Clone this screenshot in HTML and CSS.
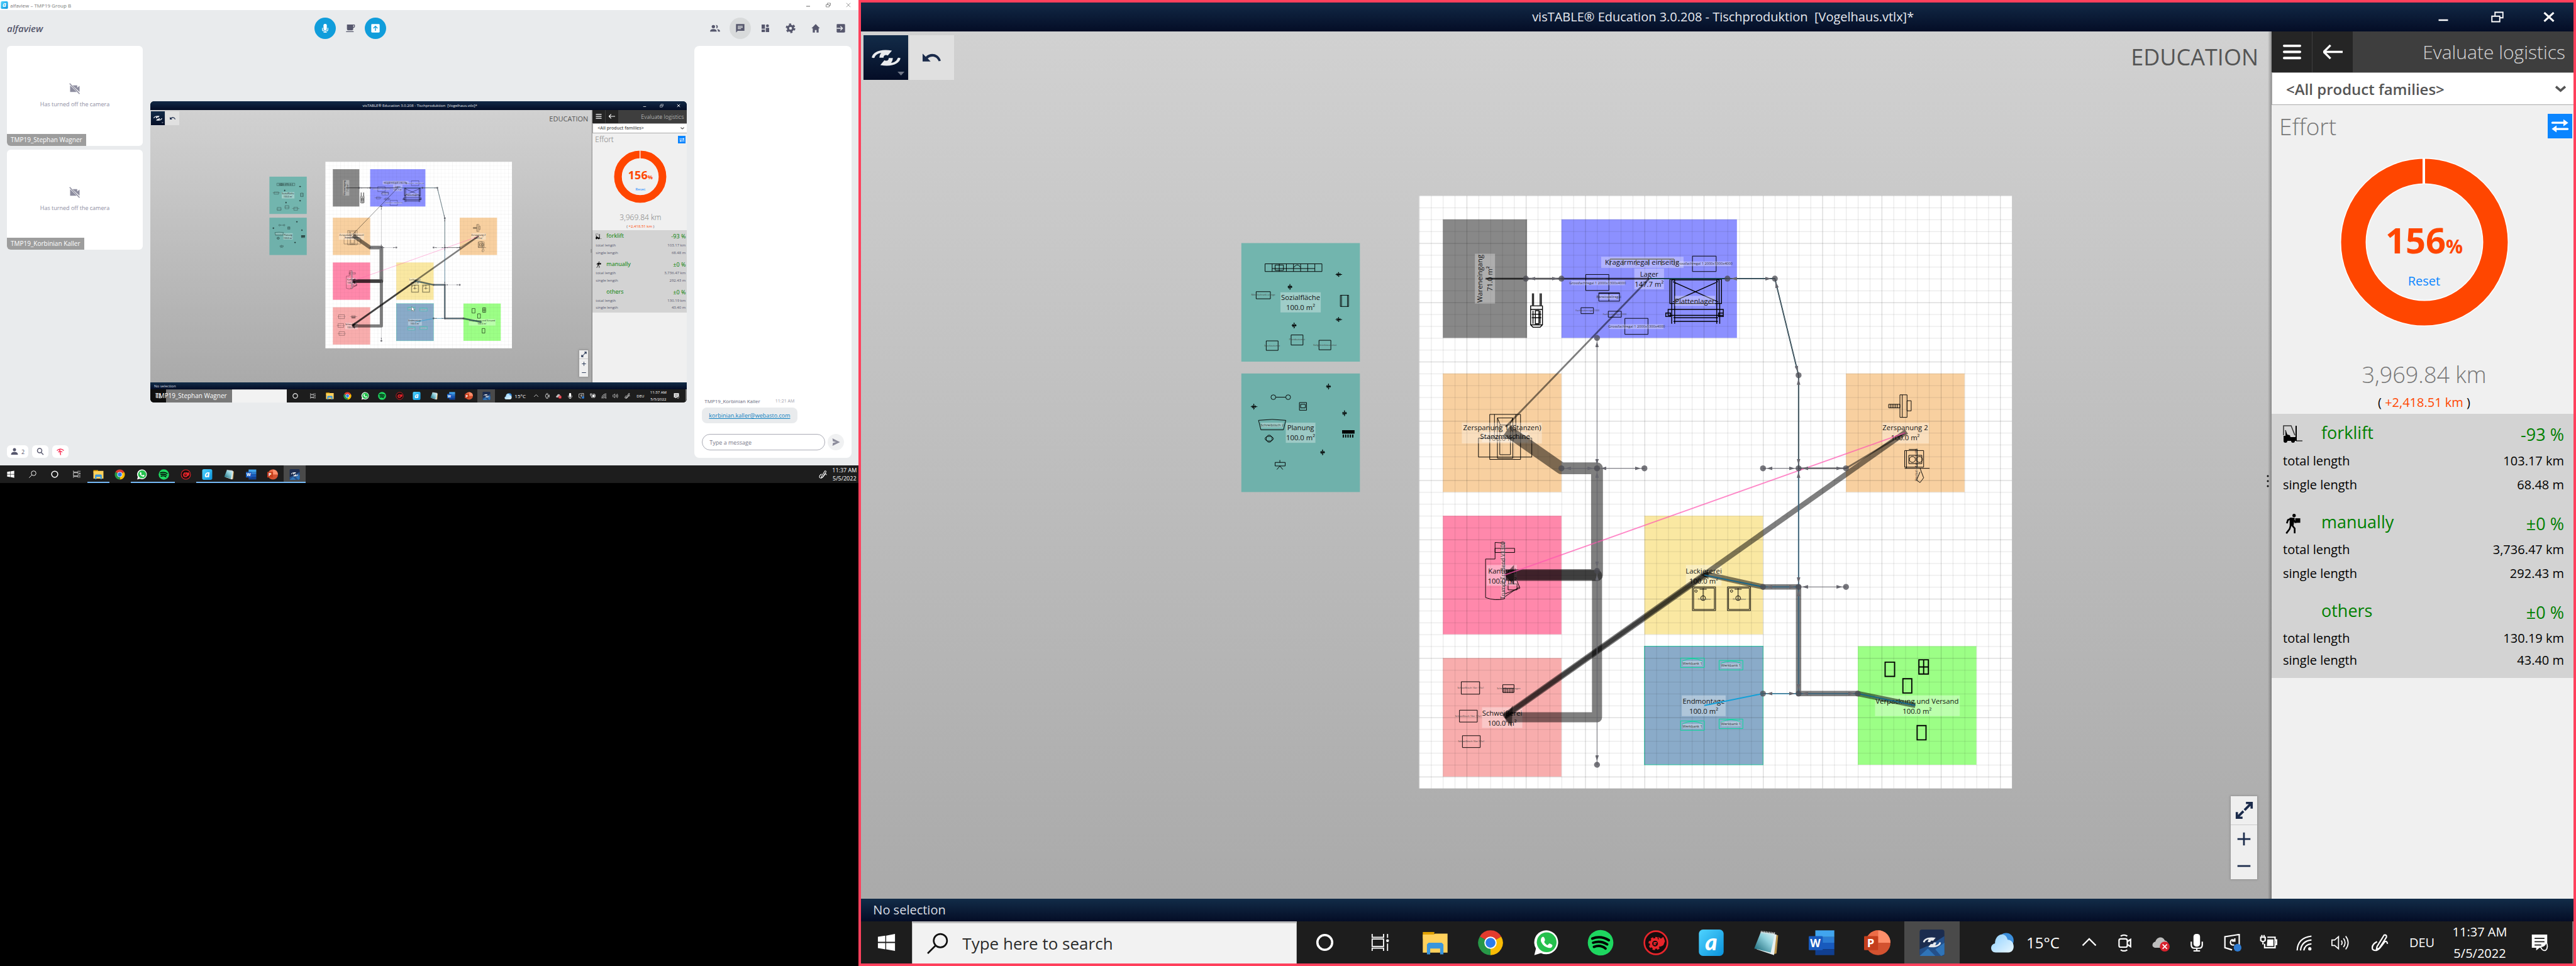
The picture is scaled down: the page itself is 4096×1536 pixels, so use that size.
FILE: index.html
```html
<!DOCTYPE html>
<html lang="en">
<head>
<meta charset="utf-8">
<title>alfaview – TMP19 Group B</title>
<link rel="stylesheet" href="styles.css">
</head>
<body>
<svg class="defs" aria-hidden="true">
  <defs>
    <linearGradient id="g-alfa" x1="0" y1="0" x2="1" y2="1"><stop offset="0" stop-color="#4fd3ff"/><stop offset="1" stop-color="#0a93dc"/></linearGradient>
    <linearGradient id="g-note" x1="0" y1="1" x2="1" y2="0"><stop offset="0" stop-color="#0f5f70"/><stop offset=".6" stop-color="#8fd0dc"/><stop offset="1" stop-color="#e4f6f8"/></linearGradient>
    <linearGradient id="g-sky" x1="0" y1="0" x2="1" y2="1"><stop offset="0" stop-color="#8fd0ff"/><stop offset="1" stop-color="#e8f7ff"/></linearGradient>
    <marker id="tip" viewBox="0 0 10 6" refX="16" refY="3" markerWidth="10" markerHeight="6" markerUnits="userSpaceOnUse" orient="auto-start-reverse"><path d="M0 0L10 3L0 6z" fill="#66666e"/></marker>
    <pattern id="minor" width="20" height="20" patternUnits="userSpaceOnUse"><path d="M.5 0V20M0 .5H20" stroke="#000" stroke-opacity=".11" fill="none"/></pattern>
    <pattern id="major" x="80" y="80" width="100" height="100" patternUnits="userSpaceOnUse"><path d="M.5 0V100M0 .5H100" stroke="#000" stroke-opacity=".1" fill="none"/></pattern>
  </defs>
  <symbol id="i-win" viewBox="0 0 32 32"><path fill="#fff" d="M1 6l13-2v11H1zM15.500 4L31 1v14H15.500zM1 17h13v11L1 26zM15.500 17H31v14l-15.500-3z"/></symbol>
  <symbol id="i-mag" viewBox="0 0 32 32"><g fill="none" stroke="currentColor" stroke-width="2.500"><circle cx="20" cy="12" r="10"/><path d="M13 19L1 31"/></g></symbol>
  <symbol id="i-cortana" viewBox="0 0 32 32"><circle cx="16" cy="16" r="13" fill="none" stroke="#fff" stroke-width="4"/></symbol>
  <symbol id="i-tasks" viewBox="0 0 32 32"><path fill="none" stroke="#fff" stroke-width="2" d="M2 1v6h20V1M2 10h20v13H2zM2 31v-5h20v5M29 1v7M29 18v13"/><circle cx="29" cy="13" r="2.500" fill="#fff"/></symbol>
  <symbol id="i-folder" viewBox="0 0 32 32"><path fill="#e0a100" d="M1 3h14v8H1z"/><path fill="#ffd15c" d="M1 6h13l2-1h15v23H1z"/><path fill="#3a96dd" d="M6 30V18l2-2h16l2 2v12h-4v-7H10v7z"/></symbol>
  <symbol id="i-chrome" viewBox="0 0 32 32"><path fill="#e33b2e" d="M16 16L3 8.500A15 15 0 0 1 29 8.500z"/><path fill="#fbbc05" d="M16 16L29 8.500A15 15 0 0 1 16 31z"/><path fill="#279847" d="M16 16V31A15 15 0 0 1 3 8.500z"/><path fill="#e33b2e" d="M16 8.500H29L16 12z"/><circle cx="16" cy="16" r="7.500" fill="#fff"/><circle cx="16" cy="16" r="6" fill="#2d7cec"/></symbol>
  <symbol id="i-wa" viewBox="0 0 32 32"><path fill="#fff" d="M2 31l2-8A14.500 14.500 0 1 1 10 28.500z"/><circle cx="17" cy="15.500" r="12" fill="#25c04d"/><path fill="#fff" d="M12 9c2-1 3 3 3 4l-1 2c1 2 2 3 4 4l2-2c2 0 4 2 4 2 0 3-3 4-5 3-5-1-8-5-9-8 0-2 0-4 2-5z"/></symbol>
  <symbol id="i-spot" viewBox="0 0 32 32"><circle cx="16" cy="16" r="15.500" fill="#1ed760"/><path fill="none" stroke="#000" stroke-width="3" stroke-linecap="round" d="M6 11q10-4 20 2M7 16q9-3 17 2M8 21q8-3 14 2"/></symbol>
  <symbol id="i-red" viewBox="0 0 32 32"><circle cx="16" cy="16" r="14" fill="#150c0d" stroke="#e8252b" stroke-width="2"/><g fill="none" stroke="#e8252b"><circle cx="15" cy="17" r="5" stroke-width="3"/><circle cx="15" cy="17" r="7" stroke-width="2" stroke-dasharray="3 2.500"/></g><path fill="#e8252b" d="M19 9l3 2 3-2 2 5-2 5-4 2z"/><path fill="none" stroke="#e8252b" stroke-width="1.500" d="M17 16h-3v2h2"/></symbol>
  <symbol id="i-alfa" viewBox="0 0 32 32"><rect x="1" y="0" width="30" height="32" rx="5" fill="url(#g-alfa)"/><text x="16" y="25" text-anchor="middle" font-family="Lato, sans-serif" font-style="italic" font-weight="900" font-size="28" fill="#fff">a</text></symbol>
  <symbol id="i-note" viewBox="0 0 32 32"><path fill="#b8924a" d="M27 6l3 1-2 22-4 1z"/><path fill="#e8f0f0" d="M10 3l18 3-3 25-21-7z"/><path fill="url(#g-note)" d="M9 3l17 2-5 23L1 23z"/><path stroke="#ddd" stroke-dasharray="1 1" stroke-width="3" d="M9 3l18 2"/></symbol>
  <symbol id="i-word" viewBox="0 0 32 32"><path fill="#41a5ee" d="M8 1h23v8H8z"/><path fill="#2b7cd3" d="M8 9h23v7H8z"/><path fill="#185abd" d="M8 16h23v8H8z"/><path fill="#103f91" d="M8 24h23v7H8z"/><rect y="8" width="17" height="17" rx="1" fill="#185abd"/><text x="8" y="21" text-anchor="middle" font-family="Open Sans, sans-serif" font-weight="700" font-size="13" fill="#fff">W</text></symbol>
  <symbol id="i-ppt" viewBox="0 0 32 32"><circle cx="17" cy="16" r="15" fill="#d35230"/><path fill="#ed6c47" d="M17 16V1A15 15 0 0 0 2 16z"/><path fill="#ff8f6b" d="M17 1A15 15 0 0 1 32 16H17z"/><rect y="8" width="17" height="17" rx="1" fill="#c43e1c"/><text x="8" y="21" text-anchor="middle" font-family="Open Sans, sans-serif" font-weight="700" font-size="14" fill="#fff">P</text></symbol>
  <symbol id="i-swirl" viewBox="84 327 195 111"><g fill="#e9ebee"><path d="M84 380C90 345 140 318 221 333L193 367C180 358 163 365 164 381H136C137 366 141 356 149 349C125 350 108 364 102 383Q92 384 84 380z"/><path transform="rotate(180 181.500 382.500)" d="M84 380C90 345 140 318 221 333L193 367C180 358 163 365 164 381H136C137 366 141 356 149 349C125 350 108 364 102 383Q92 384 84 380z"/></g></symbol>
  <symbol id="i-vis" viewBox="0 0 32 32"><rect x="1" width="30" height="32" rx="3" fill="#1b2c4f"/><path fill="#24508a" d="M1 24l14-6 16-10v21q0 3-3 3H4q-3 0-3-3z"/><path fill="#2f74b8" d="M1 32l10-9 9 9zM20 24l11-8v14l-4 2z"/><use href="#i-swirl" x="5" y="9" width="22" height="13"/></symbol>
  <symbol id="i-weather" viewBox="0 0 32 32"><circle cx="21" cy="13" r="10" fill="#3b8fdd"/><path fill="url(#g-sky)" d="M7 29C-1 29-1 18 6 17 6 4 20 0 23 12c10 0 11 17 1 17z"/></symbol>
  <symbol id="i-up" viewBox="0 0 32 32"><path fill="none" stroke="#fff" stroke-width="2.500" d="M4 21L16 9l12 12"/></symbol>
  <symbol id="i-meet" viewBox="0 0 32 32"><g fill="none" stroke="#fff" stroke-width="2.500"><rect x="5" y="9" width="15" height="15" rx="3"/><path d="M20 14l6-4v13l-6-4M8 4q6-4 12 0M8 29q6 4 12 0"/></g></symbol>
  <symbol id="i-cloudx" viewBox="0 0 32 32"><path fill="#bdbdbd" d="M5 25C-2 24 0 15 6 14c2-9 14-11 17-2 8 1 8 13 0 13z"/><circle cx="23" cy="23" r="9" fill="#d9232e"/><path stroke="#fff" stroke-width="2" d="M19 19l8 8M27 19l-8 8"/></symbol>
  <symbol id="i-mic" viewBox="0 0 32 32"><rect x="10" y="0" width="12" height="23" rx="5" fill="currentColor"/><path fill="none" stroke="currentColor" stroke-width="2.500" d="M6 14v6q0 6 6 6h8q6 0 6-6v-6M16 26v5M10 31h12"/></symbol>
  <symbol id="i-sync" viewBox="0 0 32 32"><path fill="none" stroke="#fff" stroke-width="2.500" d="M15 29L2 25V5l26-4v20M19 12q-6-4-7 3 0 6 7 5M20 8v5h-5"/><circle cx="25" cy="25" r="7" fill="#2f7bd0"/></symbol>
  <symbol id="i-power" viewBox="0 0 32 32"><path fill="none" stroke="#fff" stroke-width="2.500" d="M14 6h14v19H9v-7M28 11h3v8h-3M2 6h8v6q-4 4-8 0zM4 6V2M8 6V2M6 14v5"/><path fill="#fff" d="M14 10h11v12H13z"/></symbol>
  <symbol id="i-wifi" viewBox="0 0 32 32"><g fill="none" stroke="#fff" stroke-width="2.500"><path d="M3 30Q4 7 29 4M9 30Q11 13 29 11M15 30Q17 19 29 18"/></g><circle cx="26" cy="27" r="3" fill="#fff"/></symbol>
  <symbol id="i-sound" viewBox="0 0 32 32"><path fill="none" stroke="#fff" stroke-width="2" d="M1 11h5l7-6v22l-7-6H1zM18 12q3 4 0 8M22 8q6 8 0 16M26 4q9 12 0 24"/></symbol>
  <symbol id="i-pen" viewBox="0 0 32 32"><path fill="none" stroke="#fff" stroke-width="2.500" d="M11 23L24 2q5-1 4 4L15 26l-5 2zM11 14q-11 6-8 14 8 6 16-6l6-8q4-2 5 4"/></symbol>
  <symbol id="i-notif" viewBox="0 0 32 32"><path fill="#fff" d="M2 1h28v24H16l-6 5v-5H2z"/><path stroke="#1d1d1d" stroke-width="2" d="M7 8h18M7 14h18M7 20h12"/><path fill="#1d1d1d" stroke="#fff" stroke-width="2" d="M28 15q-2 8-10 8 2 8 9 7 6-6 1-15z"/></symbol>
  <symbol id="i-undo" viewBox="427 357 121 53"><path fill="#1b2b4b" d="M427 357V410H480L461 390C482 370 520 372 534 409L548 404C530 350 474 350 448 378z"/></symbol>
  <symbol id="i-menu" viewBox="0 0 32 32"><path stroke="#fff" stroke-width="4" stroke-linecap="round" d="M3 6h26M3 16h26M3 26h26"/></symbol>
  <symbol id="i-back" viewBox="0 0 32 32"><path fill="none" stroke="#fff" stroke-width="3.500" d="M32 16H1M12 5L1 16l11 11"/></symbol>
  <symbol id="i-chev" viewBox="0 0 32 32"><path fill="none" stroke="#555" stroke-width="7" d="M2 9l14 12L30 9"/></symbol>
  <symbol id="i-swap" viewBox="0 0 32 32"><path stroke="#fff" stroke-width="3" stroke-linecap="round" d="M5 12h18M9 21h18"/><path fill="#fff" d="M21 7l7 5-7 5zM11 16l-7 5 7 5z"/></symbol>
  <symbol id="i-fork" viewBox="0 0 32 28"><path fill="none" stroke="#333" stroke-width="1.500" d="M1 16V1h12l6 15M4 8l2 7M31 25H21"/><path d="M1 17l3 0V9l3 6 4 1 1 3 8 0V1h2v24H1z"/><circle cx="4" cy="25" r="3"/><circle cx="16" cy="25" r="3"/></symbol>
  <symbol id="i-walk" viewBox="0 0 28 36"><circle cx="16" cy="3" r="3"/><path d="M18 8h9v8h-9z"/><path fill="none" stroke="#000" stroke-width="3" d="M12 8l-7 3-2 6M14 9l4 6 5-1M10 20l-2 7-6 8M12 20l5 6v9"/><path d="M8 7h9l-2 14H8z"/></symbol>
  <symbol id="i-fit" viewBox="0 0 32 32"><path fill="#1b2b4b" d="M19 1h12v12h-4V8l-9 9-3-3 9-9h-5zM1 19h4v5l8-8 3 3-8 8h5v4H1z"/></symbol>
  <symbol id="i-plus" viewBox="0 0 32 32"><path stroke="#1b2b4b" stroke-width="4" d="M1 16h30M16 1v30"/></symbol>
  <symbol id="i-minus" viewBox="0 0 32 32"><path stroke="#1b2b4b" stroke-width="4" d="M1 16h30"/></symbol>
  <symbol id="i-min" viewBox="0 0 32 32"><path stroke="currentColor" stroke-width="4" d="M4 24h24"/></symbol>
  <symbol id="i-restore" viewBox="0 0 32 32"><path fill="none" stroke="currentColor" stroke-width="3" d="M2 14h20v14H2zM10 14V4h20v14h-8"/></symbol>
  <symbol id="i-close" viewBox="0 0 32 32"><path stroke="currentColor" stroke-width="5" d="M4 5l24 22M28 5L4 27"/></symbol>
  <symbol id="i-thin-close" viewBox="0 0 32 32"><path stroke="currentColor" stroke-width="2.500" d="M3 3l26 26M29 3L3 29"/></symbol>
  <symbol id="i-cup" viewBox="0 0 24 24"><path fill="currentColor" d="M4 3h17q2 0 2 2v3q0 3-4 3v2q0 4-4 4H8q-4 0-4-4zm15 2v4q2 0 2-1V5zM2 19h18v2H2z"/></symbol>
  <symbol id="i-share" viewBox="0 0 24 24"><path fill="#fff" d="M4 2h16q2 0 2 2v16q0 2-2 2H4q-2 0-2-2V4q0-2 2-2z"/><path fill="none" stroke="#109ddb" stroke-width="2" d="M12 18V7M7 12l5-5 5 5"/></symbol>
  <symbol id="i-people" viewBox="0 0 24 24"><g fill="currentColor"><circle cx="8" cy="8" r="4"/><path d="M0 20q0-6 8-6t8 6zM14 4a4 4 0 1 1 1 8q2-4-1-8zM17 14q7 1 7 6h-5q0-4-2-6z"/></g></symbol>
  <symbol id="i-chat" viewBox="0 0 24 24"><path fill="currentColor" fill-rule="evenodd" d="M2 2h20v16H6l-4 4zM6 6v2h12V6zm0 3v2h12V9zm0 3v2h8v-2z"/></symbol>
  <symbol id="i-tiles" viewBox="0 0 24 24"><path fill="currentColor" d="M3 3h8v10H3zM3 15h8v6H3zM13 11h8v10h-8z"/><circle cx="17" cy="6" r="3.500" fill="currentColor"/></symbol>
  <symbol id="i-gear" viewBox="0 0 24 24"><circle cx="12" cy="12" r="6" fill="none" stroke="currentColor" stroke-width="5"/><circle cx="12" cy="12" r="9.500" fill="none" stroke="currentColor" stroke-width="4" stroke-dasharray="5 5"/></symbol>
  <symbol id="i-home" viewBox="0 0 24 24"><path fill="currentColor" d="M12 2l10 10h-3v10h-5v-6h-4v6H5V12H2z"/></symbol>
  <symbol id="i-exit" viewBox="0 0 24 24"><path fill="currentColor" d="M4 2h16q2 0 2 2v16q0 2-2 2H4q-2 0-2-2V4q0-2 2-2z"/><path fill="none" stroke="#e9ebed" stroke-width="2" d="M2 12h14M11 7l5 5-5 5"/></symbol>
  <symbol id="i-nocam" viewBox="0 0 24 24"><path fill="currentColor" d="M7 5h10v5l5-4v13zM2 5l14 14H2z"/><path stroke="currentColor" stroke-width="2" d="M1 1l21 22"/></symbol>
  <symbol id="i-person" viewBox="0 0 24 24"><circle cx="12" cy="6" r="5" fill="currentColor"/><path fill="currentColor" d="M1 22q0-9 11-9t11 9z"/></symbol>
  <symbol id="i-find" viewBox="0 0 24 24"><g fill="none" stroke="currentColor" stroke-width="3"><circle cx="10" cy="9" r="7"/><path d="M14 14l8 8"/></g></symbol>
  <symbol id="i-signal" viewBox="0 0 24 24"><g fill="none" stroke="#f8365a" stroke-width="3"><path d="M1 9Q12-1 23 9M5 14q7-6 13 0M9 4l4 19"/></g></symbol>
  <symbol id="i-send" viewBox="0 0 24 24"><path fill="#8d8d9c" d="M4 3l18 9-18 9 1-7 8-2-8-2z"/></symbol>
</svg>

<main class="desktop">
  <div class="left-col">
    <section class="alfa">
      <header class="alfa-title">
        <svg class="s12"><use href="#i-alfa"/></svg><span>alfaview – TMP19 Group B</span>
        <div class="alfa-win"><button aria-label="Minimize"><svg class="s8"><use href="#i-min"/></svg></button><button aria-label="Restore"><svg class="s8"><use href="#i-restore"/></svg></button><button aria-label="Close"><svg class="s8"><use href="#i-thin-close"/></svg></button></div>
      </header>
      <div class="alfa-bar">
        <div class="brand">alfaview</div>
        <div class="alfa-tools"><button class="on" aria-label="Microphone"><svg class="s14"><use href="#i-mic"/></svg></button><button aria-label="Break"><svg class="s16"><use href="#i-cup"/></svg></button><button class="on" aria-label="Share"><svg class="s16"><use href="#i-share"/></svg></button></div>
        <div class="alfa-tools end"><button aria-label="People"><svg class="s16"><use href="#i-people"/></svg></button><button class="sel" aria-label="Chat"><svg class="s16"><use href="#i-chat"/></svg></button><button aria-label="Layout"><svg class="s16"><use href="#i-tiles"/></svg></button><button aria-label="Settings"><svg class="s16"><use href="#i-gear"/></svg></button><button aria-label="Home"><svg class="s16"><use href="#i-home"/></svg></button><button aria-label="Leave"><svg class="s16"><use href="#i-exit"/></svg></button></div>
      </div>
      <div class="alfa-body">
        <div class="people">
          <article class="tile"><div class="off"><svg class="s18"><use href="#i-nocam"/></svg><p>Has turned off the camera</p></div><span class="tag">TMP19_Stephan Wagner</span></article>
          <article class="tile"><div class="off"><svg class="s18"><use href="#i-nocam"/></svg><p>Has turned off the camera</p></div><span class="tag">TMP19_Korbinian Kaller</span></article>
          <div class="badges"><button><svg class="s12"><use href="#i-person"/></svg>2</button><button aria-label="Find"><svg class="s12"><use href="#i-find"/></svg></button><button aria-label="Connection"><svg class="s12"><use href="#i-signal"/></svg></button></div>
        </div>

        <div class="share">
          <section class="vt mini">
            <header class="vt-title"><h2>visTABLE® Education 3.0.208 - Tischproduktion&nbsp; [Vogelhaus.vtlx]*</h2><div class="vt-win"><button aria-label="Minimize"><svg><use href="#i-min"/></svg></button><button aria-label="Restore"><svg><use href="#i-restore"/></svg></button><button aria-label="Close"><svg><use href="#i-close"/></svg></button></div></header>
            <div class="vt-work">
              <div class="canvas">
                <svg class="plan" viewBox="-938 -277 2370 1463"><use href="#plan"/></svg>
                <div class="tools"><button class="main-btn" aria-label="Main menu"><svg class="swirl"><use href="#i-swirl"/></svg></button><button aria-label="Undo"><svg class="undo"><use href="#i-undo"/></svg></button></div>
                <div class="edition">EDUCATION</div>
                <div class="grip"></div>
                <div class="zoom"><button aria-label="Fit"><svg><use href="#i-fit"/></svg></button><button aria-label="Zoom in"><svg><use href="#i-plus"/></svg></button><button aria-label="Zoom out"><svg><use href="#i-minus"/></svg></button></div>
                <svg class="pointer" viewBox="0 0 12 18"><path d="M1 1v14l3-3 3 5 2-1-2-5h4z" fill="#fff" stroke="#555"/></svg>
              </div>
              <aside class="panel">
                <header><button aria-label="Menu"><svg><use href="#i-menu"/></svg></button><button aria-label="Back"><svg><use href="#i-back"/></svg></button><h3>Evaluate logistics</h3></header>
                <div class="pick"><select aria-label="Product family"><option>&lt;All product families&gt;</option></select><svg><use href="#i-chev"/></svg></div>
                <div class="effort"><span>Effort</span><button aria-label="Swap"><svg><use href="#i-swap"/></svg></button></div>
                <div class="gauge"><svg viewBox="0 0 268 268"><circle cx="134" cy="134" r="113" fill="none" stroke="#fff" stroke-width="42"/><circle cx="134" cy="134" r="113" fill="none" stroke="#ff4600" stroke-width="39"/><path d="M133 0V42" stroke="#fff" stroke-width="4"/></svg><div><strong>156<small>%</small></strong><button>Reset</button></div></div>
                <p class="total">3,969.84 km</p><p class="delta">( <b>+2,418.51 km</b> )</p>
                <table>
                  <tbody><tr class="grp"><th><svg><use href="#i-fork"/></svg>forklift</th><td>-93 %</td></tr><tr><th>total length</th><td>103.17 km</td></tr><tr><th>single length</th><td>68.48 m</td></tr></tbody>
                  <tbody><tr class="grp"><th><svg><use href="#i-walk"/></svg>manually</th><td>±0 %</td></tr><tr><th>total length</th><td>3,736.47 km</td></tr><tr><th>single length</th><td>292.43 m</td></tr></tbody>
                  <tbody><tr class="grp"><th><svg></svg>others</th><td>±0 %</td></tr><tr><th>total length</th><td>130.19 km</td></tr><tr><th>single length</th><td>43.40 m</td></tr></tbody>
                </table>
              </aside>
            </div>
            <footer class="status">No selection</footer>
            <div class="taskbar">
              <button class="start" aria-label="Start"><svg class="glyph"><use href="#i-win"/></svg></button>
              <div class="search"></div>
              <nav><button aria-label="Cortana"><svg class="glyph"><use href="#i-cortana"/></svg></button><button aria-label="Task view"><svg class="glyph"><use href="#i-tasks"/></svg></button><button aria-label="Explorer"><svg><use href="#i-folder"/></svg></button><button aria-label="Chrome"><svg><use href="#i-chrome"/></svg></button><button aria-label="WhatsApp"><svg><use href="#i-wa"/></svg></button><button aria-label="Spotify"><svg><use href="#i-spot"/></svg></button><button aria-label="Launcher"><svg><use href="#i-red"/></svg></button><button aria-label="alfaview"><svg><use href="#i-alfa"/></svg></button><button aria-label="Notepad"><svg><use href="#i-note"/></svg></button><button aria-label="Word"><svg><use href="#i-word"/></svg></button><button aria-label="PowerPoint"><svg><use href="#i-ppt"/></svg></button><button class="active" aria-label="visTABLE"><svg><use href="#i-vis"/></svg></button></nav>
              <div class="tray"><div class="weather"><svg><use href="#i-weather"/></svg>15°C</div><i><svg><use href="#i-up"/></svg></i><i><svg><use href="#i-meet"/></svg></i><i><svg><use href="#i-cloudx"/></svg></i><i><svg><use href="#i-mic"/></svg></i><i><svg><use href="#i-sync"/></svg></i><i><svg><use href="#i-power"/></svg></i><i><svg><use href="#i-wifi"/></svg></i><i><svg><use href="#i-sound"/></svg></i><i class="wide"><svg><use href="#i-pen"/></svg></i><span class="lang">DEU</span><time>11:37 AM<br>5/5/2022</time><i class="wide"><svg><use href="#i-notif"/></svg></i><span class="peek"></span></div>
            </div>
          </section>
          <span class="tag over">TMP19_Stephan Wagner</span>
        </div>

        <aside class="chat">
          <div class="msg-head"><span>TMP19_Korbinian Kaller</span><time>11:21 AM</time></div>
          <div class="bubble"><a href="mailto:korbinian.kaller@webasto.com">korbinian.kaller@webasto.com</a></div>
          <form><input type="text" placeholder="Type a message" aria-label="Type a message"><button type="button" aria-label="Send"><svg class="s16"><use href="#i-send"/></svg></button></form>
        </aside>
      </div>
      <div class="taskbar second">
        <nav><button aria-label="Start"><svg class="glyph"><use href="#i-win"/></svg></button><button aria-label="Search"><svg class="glyph"><use href="#i-mag"/></svg></button><button aria-label="Cortana"><svg class="glyph"><use href="#i-cortana"/></svg></button><button aria-label="Task view"><svg class="glyph"><use href="#i-tasks"/></svg></button><button class="run" aria-label="Explorer"><svg><use href="#i-folder"/></svg></button><button aria-label="Chrome"><svg><use href="#i-chrome"/></svg></button><button class="run" aria-label="WhatsApp"><svg><use href="#i-wa"/></svg></button><button class="run" aria-label="Spotify"><svg><use href="#i-spot"/></svg></button><button aria-label="Launcher"><svg><use href="#i-red"/></svg></button><button class="run" aria-label="alfaview"><svg><use href="#i-alfa"/></svg></button><button class="run" aria-label="Notepad"><svg><use href="#i-note"/></svg></button><button class="run" aria-label="Word"><svg><use href="#i-word"/></svg></button><button class="run" aria-label="PowerPoint"><svg><use href="#i-ppt"/></svg></button><button class="run active" aria-label="visTABLE"><svg><use href="#i-vis"/></svg></button></nav>
        <div class="tray"><i><svg><use href="#i-pen"/></svg></i><time>11:37 AM<br>5/5/2022</time></div>
      </div>
    </section>
  </div>

  <section class="vt big">
    <header class="vt-title"><h1>visTABLE® Education 3.0.208 - Tischproduktion&nbsp; [Vogelhaus.vtlx]*</h1><div class="vt-win"><button aria-label="Minimize"><svg><use href="#i-min"/></svg></button><button aria-label="Restore"><svg><use href="#i-restore"/></svg></button><button aria-label="Close"><svg><use href="#i-close"/></svg></button></div></header>
    <div class="vt-work">
      <div class="canvas">
        <svg class="plan" viewBox="-937 -277 2370 1463">
          <g id="plan" font-family="Open Sans, sans-serif" font-size="12" text-anchor="middle">
            <rect width="1000" height="1000" fill="#fff"/>
            <g>
              <rect x="-300" y="80" width="200" height="200" fill="#72b5ae"/><rect x="-300" y="300" width="200" height="200" fill="#6fb1ab"/>
              <rect x="40" y="40" width="142" height="200" fill="#888"/><rect x="240" y="40" width="296" height="200" fill="#8c90ff"/>
              <rect x="40" y="300" width="200" height="200" fill="#f8d0a0"/><rect x="720" y="300" width="200" height="200" fill="#f8d0a0"/>
              <rect x="40" y="540" width="200" height="200" fill="#ff88ab"/><rect x="380" y="540" width="200" height="200" fill="#fae8a2"/>
              <rect x="40" y="780" width="200" height="200" fill="#f8adad"/><rect x="380" y="760" width="200" height="200" fill="#8aabc9" stroke="#1fd0a5"/>
              <rect x="740" y="760" width="200" height="200" fill="#9cff86"/>
            </g>
            <rect width="1000" height="1000" fill="url(#minor)"/><rect width="1000" height="1000" fill="url(#major)"/>
            <g fill="none" stroke="#000">
              <path d="M191 165v20M193 165v20M204 165v20M206 165v20M188 186h20v32l-4 4h-12l-4-4zM188 192h20M192 194v22M204 194v22M196 194h6v22h-6zM190 200h16M190 206h16M188 218h20" stroke-width="1.500"/>
              <path d="M322 107H430M322 107v11M344 107v11M366 107v11M387 107v11M409 107v11M430 107v11" stroke-width="2" stroke="#444"/>
              <path d="M461 102h40v26h-40zM281 133h39v27h-39zM303 164h35v14h-35zM320 164v14M303 165h35M273 189h21v10h-21zM319 195h22v10h-22zM347 207h39v27h-39z"/>
              <path d="M426 142h80v40h-80zM428 145L504 179M504 145L428 179M423 141h8v41h-8zM502 141h8v41h-8zM426 182v34M431 182v34M502 182v34M507 182v34M420 192h93v10h-93zM416 198h8v6h-8zM505 198h8v6h-8zM429 206h75M429 212h75" stroke-width="1.500"/>
              <path d="M119 369h52v76h-52zM132 375h26v68h-26zM100 409h90v32h-90zM136 387h18v50h-18zM127 369v40M163 369v40M132 375l5 12M158 375l-5 12"/>
              <path d="M811 336h12v38h-12zM815 336v38M823 346h7v17h-7zM792 352h19v6h-19zM795 352v6M798 352v6M801 352v6M804 352v6M807 352v6"/>
              <path d="M819 430h32v28h-32zM822 430v30M826 428h14v30M819 460h42M826 438h22v14h-22zM845 460l6 16-6 8-6-4 6-14"/><circle cx="832" cy="445" r="5"/><circle cx="844" cy="445" r="5"/>
              <path d="M112 613h16V585l16 1v94q-16 4-32-2zM128 595h33v7h-33zM169 660l-25 17M165 650l5 12-26 10M150 655h15v10h-15z"/>
              <path d="M461 660h39v40h-39zM463 662h35v36h-35zM520 660h39v40h-39zM522 662h35v36h-35zM473 664h12M479 662v20M532 664h12M538 662v20"/><circle cx="479" cy="679" r="4"/><circle cx="538" cy="679" r="4"/><circle cx="467" cy="667" r="2"/><circle cx="527" cy="667" r="2"/>
              <path d="M71 820h31v21H71zM68 868h30v20H68zM73 911h30v20H73zM141 825h19v13h-19zM143 831v8M146 831v8M149 831v8M152 831v8M155 831v8M158 831v8M141 831h19"/>
              <path d="M786 787h16v24h-16zM843 783h16v24h-16zM851 783v24M843 795h16M816 815h15v24h-15zM840 894h15v24h-15z" stroke-width="2"/>
              <path d="M-260 115h96v13h-96zM-248 115v13M-236 115v13M-224 115v13M-212 115v13M-200 115v13M-188 115v13M-176 115v13M-248 123h72M-243 117h14v9h-14zM-212 121l5-4h3l4 4"/>
              <path d="M-275 162h24v12h-24zM-133 168h14v19h-14zM-131 168v19M-121 168v19M-258 245h20v16h-20zM-216 235h20v17h-20zM-169 244h20v16h-20z"/>
              <path d="M-242 340h17M-271 379q23-3 46 0l-4 16h-38zM-202 349h12v13h-12zM-200 352h8v6h-8zM-243 450h17v6h-17zM-235 446v4M-235 456l-5 6M-235 456l5 6"/>
              <path d="M-130 400h21M-130 397h21" stroke-width="3"/><path d="M-128 403v5M-124 403v5M-120 403v5M-116 403v5M-112 403v5" stroke-width="2"/>
              <circle cx="-246" cy="340" r="4"/><circle cx="-221" cy="340" r="4"/><ellipse cx="-253" cy="410" rx="7" ry="4"/><ellipse cx="-253" cy="410" rx="5" ry="6"/>
              <g stroke-width="3" stroke-dasharray="1 1"><circle cx="-136" cy="133" r="2"/><circle cx="-218" cy="154" r="2"/><circle cx="-136" cy="209" r="2"/><circle cx="-211" cy="219" r="2"/><circle cx="-153" cy="322" r="2"/><circle cx="-279" cy="356" r="2"/><circle cx="-126" cy="367" r="2"/><circle cx="-163" cy="433" r="2"/></g>
              <path d="M-141 133h11M-136 129v8M-222 154h8M-218 149v10M-141 209h11M-136 205v8M-215 219h8M-211 214v10M-157 322h8M-153 317v10M-284 356h11M-279 351v10M-130 367h8M-126 362v10M-167 433h8M-163 428v10"/>
              <path stroke="#00dc9b" d="M441 780h40v16h-40zM444 785q17-8 34 0M506 784h40v16h-40zM509 789q17-8 34 0M441 886h40v16h-40zM444 891q17-8 34 0M506 883h40v16h-40zM509 888q17-8 34 0"/>
            </g>
            <g fill="#fff" fill-opacity=".32">
              <rect x="-234" y="163" width="68" height="34"/><rect x="-225" y="383" width="50" height="34"/><rect x="94" y="98" width="34" height="84"/><rect x="307" y="103" width="139" height="19"/><rect x="363" y="123" width="50" height="35"/><rect x="431" y="169" width="68" height="17"/><rect x="72" y="383" width="135" height="35"/><rect x="106" y="399" width="78" height="17"/><rect x="781" y="383" width="79" height="35"/><rect x="114" y="623" width="51" height="35"/><rect x="138" y="586" width="7" height="92"/><rect x="450" y="623" width="60" height="35"/><rect x="106" y="863" width="68" height="35"/><rect x="443" y="843" width="74" height="35"/><rect x="769" y="843" width="143" height="35"/>
              <rect x="435" y="111" width="91" height="8"/><rect x="256" y="143" width="91" height="8"/><rect x="321" y="217" width="91" height="8"/><rect x="304" y="167" width="32" height="8"/><rect x="445" y="785" width="32" height="8"/><rect x="510" y="789" width="32" height="8"/><rect x="445" y="891" width="32" height="8"/><rect x="510" y="887" width="32" height="8"/><rect x="-267" y="383" width="38" height="8"/>
            </g>
            <g fill="#111">
              <text x="-200" y="176">Sozialfläche</text><text x="-200" y="193">100.0 m²</text><text x="-200" y="396">Planung</text><text x="-200" y="413">100.0 m²</text>
              <g transform="rotate(-90 111 140)"><text x="111" y="136">Wareneingang</text><text x="111" y="153">71.0 m²</text></g>
              <text x="376" y="117">Kragarmregal einseitig</text><text x="388" y="137">Lager</text><text x="388" y="154">147.7 m²</text><text x="465" y="182">Plattenlager</text>
              <text x="140" y="396">Zerspanung 1 (Stanzen)</text><text x="140" y="414" fill-opacity=".5">100.0 m²</text><text x="145" y="411">Stanzmaschine</text>
              <text x="820" y="396">Zerspanung 2</text><text x="820" y="413">100.0 m²</text><text x="140" y="637">Kanterei</text><text x="140" y="654">100.0 m²</text><text x="480" y="637">Lackiererei</text><text x="480" y="654">100.0 m²</text>
              <text x="140" y="877">Schweißerei</text><text x="140" y="894">100.0 m²</text><text x="480" y="857">Endmontage</text><text x="480" y="874">100.0 m²</text><text x="840" y="857">Verpackung und Versand</text><text x="840" y="874">100.0 m²</text>
            </g>
            <g fill="#333" font-size="6">
              <text x="481" y="117">Grossfachregal 1 2000x1300x4000</text><text x="301" y="149">Grossfachregal 1 2000x1300x4000</text><text x="367" y="223">Grossfachregal 1 2000x1300x4000</text><text x="320" y="173">Bereitstellregal</text>
              <text x="461" y="791">Werkbank 1</text><text x="526" y="795">Werkbank 1</text><text x="461" y="897">Werkbank 1</text><text x="526" y="893">Werkbank 1</text><text x="-248" y="389">Schreibtisch 2</text>
              <text transform="translate(145 632) rotate(-90)" font-size="9">Trumpf TruBend V1300</text><text transform="translate(841 454) rotate(-90)">Deckel-Maho MUPS</text>
            </g>
            <g fill="#444" font-size="4">
              <text x="284" y="195">Fachbodenregal 1000</text><text x="330" y="201">Fachbodenregal 1000</text><text x="87" y="832">Schweißtisch 16er 1,5x1</text><text x="83" y="879">Schweißtisch 16er 1,5x1</text><text x="88" y="922">Schweißtisch 16er 1,5x1</text><text x="151" y="833">Schweißgerätewagen</text><text x="481" y="682">Drehkabine</text><text x="540" y="682">Drehkabine</text>
              <text x="-263" y="169">Metallschrank orange</text><text x="-248" y="254">Snackautomat</text><text x="-206" y="244">Pfandautomat</text><text x="-159" y="253">Kaltgetränkeautomat</text>
            </g>
            <g fill="none" stroke="#000" stroke-opacity=".5" stroke-linejoin="round">
              <path stroke-width="20" d="M148 396L240 460H300V640H146"/><path stroke-width="17" d="M146 640H300V880H146"/>
              <path stroke-width="9" d="M822 398L143 878"/><path stroke-width="9" d="M143 880L483 640"/>
              <path stroke-width="3" d="M388 140L146 390"/><path stroke-width="3" d="M820 400L720 460H640"/><path stroke-width="9" d="M481 638L580 660H640V840H740L837 860"/>
              <path stroke-width="3" stroke-opacity=".7" d="M112 140H388"/>
            </g>
            <path d="M144 880l14-20-2 36zM144 640l16-17v34zM474 639l14-4v12z" fill="#000" fill-opacity=".5"/>
            <g fill="none" stroke-width="2"><path stroke="#15414d" d="M388 140H600L640 303V460"/><path stroke="#17658a" d="M640 460V840H740L837 860M640 660H580L481 640"/><path stroke="#12a0d8" d="M481 860L580 840H640"/><path stroke="#ff55b0" stroke-opacity=".7" d="M144 640L820 400"/></g>
            <g fill="none" stroke="#66666e" stroke-width="1" marker-start="url(#tip)">
              <path marker-end="url(#tip)" d="M180 140H240"/><path marker-end="url(#tip)" d="M520 140H600"/><path marker-end="url(#tip)" d="M600 140L640 303"/><path marker-end="url(#tip)" d="M640 303V460"/><path marker-end="url(#tip)" d="M640 460V660"/><path marker-end="url(#tip)" d="M640 660V840"/><path marker-end="url(#tip)" d="M300 240V460"/><path marker-end="url(#tip)" d="M300 460V633"/><path marker-end="url(#tip)" d="M300 633V960"/><path marker-end="url(#tip)" d="M240 460H300"/><path marker-end="url(#tip)" d="M300 460H380"/><path marker-end="url(#tip)" d="M580 460H640"/><path marker-end="url(#tip)" d="M640 460H720"/><path marker-end="url(#tip)" d="M580 660H640"/><path marker-end="url(#tip)" d="M640 660H720"/><path marker-end="url(#tip)" d="M580 840H640"/><path marker-end="url(#tip)" d="M640 840H740"/>
            </g>
            <g fill="#4a4a52" fill-opacity=".75"><circle cx="180" cy="140" r="5"/><circle cx="240" cy="140" r="5"/><circle cx="520" cy="140" r="5"/><circle cx="600" cy="140" r="5"/><circle cx="640" cy="303" r="5"/><circle cx="300" cy="240" r="5"/><circle cx="240" cy="460" r="5"/><circle cx="300" cy="460" r="5"/><circle cx="380" cy="460" r="5"/><circle cx="580" cy="460" r="5"/><circle cx="640" cy="460" r="5"/><circle cx="720" cy="460" r="5"/><circle cx="300" cy="633" r="5"/><circle cx="580" cy="660" r="5"/><circle cx="640" cy="660" r="5"/><circle cx="720" cy="660" r="5"/><circle cx="580" cy="840" r="5"/><circle cx="640" cy="840" r="5"/><circle cx="740" cy="840" r="5"/><circle cx="300" cy="960" r="5"/></g>
          </g>
        </svg>
        <div class="tools"><button class="main-btn" aria-label="Main menu"><svg class="swirl"><use href="#i-swirl"/></svg></button><button aria-label="Undo"><svg class="undo"><use href="#i-undo"/></svg></button></div>
        <div class="edition">EDUCATION</div>
        <div class="grip"></div>
        <div class="zoom"><button aria-label="Fit"><svg><use href="#i-fit"/></svg></button><button aria-label="Zoom in"><svg><use href="#i-plus"/></svg></button><button aria-label="Zoom out"><svg><use href="#i-minus"/></svg></button></div>
      </div>
      <aside class="panel">
        <header><button aria-label="Menu"><svg><use href="#i-menu"/></svg></button><button aria-label="Back"><svg><use href="#i-back"/></svg></button><h3>Evaluate logistics</h3></header>
        <div class="pick"><select aria-label="Product family"><option>&lt;All product families&gt;</option></select><svg><use href="#i-chev"/></svg></div>
        <div class="effort"><span>Effort</span><button aria-label="Swap"><svg><use href="#i-swap"/></svg></button></div>
        <div class="gauge"><svg viewBox="0 0 268 268"><circle cx="134" cy="134" r="113" fill="none" stroke="#fff" stroke-width="42"/><circle cx="134" cy="134" r="113" fill="none" stroke="#ff4600" stroke-width="39"/><path d="M133 0V42" stroke="#fff" stroke-width="4"/></svg><div><strong>156<small>%</small></strong><button>Reset</button></div></div>
        <p class="total">3,969.84 km</p><p class="delta">( <b>+2,418.51 km</b> )</p>
        <table>
          <tbody><tr class="grp"><th><svg><use href="#i-fork"/></svg>forklift</th><td>-93 %</td></tr><tr><th>total length</th><td>103.17 km</td></tr><tr><th>single length</th><td>68.48 m</td></tr></tbody>
          <tbody><tr class="grp"><th><svg><use href="#i-walk"/></svg>manually</th><td>±0 %</td></tr><tr><th>total length</th><td>3,736.47 km</td></tr><tr><th>single length</th><td>292.43 m</td></tr></tbody>
          <tbody><tr class="grp"><th><svg></svg>others</th><td>±0 %</td></tr><tr><th>total length</th><td>130.19 km</td></tr><tr><th>single length</th><td>43.40 m</td></tr></tbody>
        </table>
      </aside>
    </div>
    <footer class="status">No selection</footer>
    <div class="taskbar">
      <button class="start" aria-label="Start"><svg class="glyph"><use href="#i-win"/></svg></button>
      <label class="search"><svg><use href="#i-mag"/></svg><input type="text" placeholder="Type here to search" aria-label="Type here to search"></label>
      <nav><button aria-label="Cortana"><svg class="glyph"><use href="#i-cortana"/></svg></button><button aria-label="Task view"><svg class="glyph"><use href="#i-tasks"/></svg></button><button aria-label="Explorer"><svg><use href="#i-folder"/></svg></button><button aria-label="Chrome"><svg><use href="#i-chrome"/></svg></button><button aria-label="WhatsApp"><svg><use href="#i-wa"/></svg></button><button aria-label="Spotify"><svg><use href="#i-spot"/></svg></button><button aria-label="Launcher"><svg><use href="#i-red"/></svg></button><button aria-label="alfaview"><svg><use href="#i-alfa"/></svg></button><button aria-label="Notepad"><svg><use href="#i-note"/></svg></button><button aria-label="Word"><svg><use href="#i-word"/></svg></button><button aria-label="PowerPoint"><svg><use href="#i-ppt"/></svg></button><button class="active" aria-label="visTABLE"><svg><use href="#i-vis"/></svg></button></nav>
      <div class="tray"><div class="weather"><svg><use href="#i-weather"/></svg>15°C</div><i><svg><use href="#i-up"/></svg></i><i><svg><use href="#i-meet"/></svg></i><i><svg><use href="#i-cloudx"/></svg></i><i><svg><use href="#i-mic"/></svg></i><i><svg><use href="#i-sync"/></svg></i><i><svg><use href="#i-power"/></svg></i><i><svg><use href="#i-wifi"/></svg></i><i><svg><use href="#i-sound"/></svg></i><i class="wide"><svg><use href="#i-pen"/></svg></i><span class="lang">DEU</span><time>11:37 AM<br>5/5/2022</time><i class="wide"><svg><use href="#i-notif"/></svg></i><span class="peek"></span></div>
    </div>
  </section>
</main>
</body>
</html>
```
FILE: styles.css
```css
*, *::before, *::after { box-sizing: border-box; }
body { margin: 0; background: #000; font-family: "Open Sans", "Noto Sans", sans-serif; }
button, input, select { font: inherit; color: inherit; border: 0; padding: 0; margin: 0; background: none; }
button { display: inline-flex; align-items: center; justify-content: center; }
h1, h2, h3, p { margin: 0; font-weight: 400; }
svg { display: block; flex: none; }
.defs { position: absolute; width: 0; height: 0; }
.s8 { width: 8px; height: 8px; }
.s12 { width: 12px; height: 12px; }
.s14 { width: 14px; height: 14px; }
.s16 { width: 16px; height: 16px; }
.s18 { width: 18px; height: 18px; }

.desktop { display: grid; grid-template-columns: 1fr 2fr; min-height: 100vh; }
.left-col { display: grid; grid-template-rows: 1fr 1fr; min-width: 0; }

/* Conference window */
.alfa { display: grid; grid-template-rows: 16px 57px 1fr 28px; background: #e9ebed; color: #56576d; font-size: 10px; min-width: 0; }
.alfa-title { display: flex; align-items: center; gap: 3px; padding-left: 1px; background: #fff; color: #777; font-size: 8px; }
.alfa-win { display: flex; margin-left: auto; color: #666; }
.alfa-win button { width: 32px; }
.alfa-bar { display: grid; grid-template-columns: 489px 1fr auto; align-items: center; padding: 0 11px; }
.brand { font-family: "Open Sans", sans-serif; font-style: italic; font-weight: 600; font-size: 15px; color: #55566b; }
.alfa-tools { display: flex; gap: 6px; }
.alfa-tools button { width: 34px; height: 34px; border-radius: 50%; }
.alfa-tools .on { background: #109ddb; color: #fff; }
.alfa-tools .sel { background: #d8dadb; }
.alfa-body { display: grid; grid-template-columns: 216px 1fr 250px; gap: 12px; padding: 0 11px 12px; min-width: 0; }
.people { display: flex; flex-direction: column; gap: 6px; }
.tile { display: flex; flex-direction: column; height: 159px; background: #fff; border-radius: 6px; overflow: hidden; align-items: flex-start; }
.off { flex: 1; align-self: stretch; display: flex; flex-direction: column; align-items: center; justify-content: flex-end; gap: 8px; padding-bottom: 58px; color: #8d8d9f; font-size: 9px; line-height: 16px; }
.tag { margin-top: -19px; height: 19px; line-height: 19px; padding: 0 6px; background: #9d9d9d; color: #fff; font-size: 10px; }
.badges { display: flex; gap: 6px; margin-top: auto; font-size: 9px; }
.badges button { height: 20px; min-width: 26px; padding: 0 6px; gap: 5px; background: #fff; border-radius: 6px; }
.share { align-self: center; position: relative; aspect-ratio: 16 / 9; border-radius: 6px; overflow: hidden; display: grid; min-width: 0; }
.tag.over { position: absolute; left: 0; bottom: 0; height: 21px; line-height: 21px; padding: 0 8px; background: rgba(0, 0, 0, .5); }
.chat { display: flex; flex-direction: column; justify-content: flex-end; background: #fff; border-radius: 8px; padding: 12px; }
.msg-head { display: flex; gap: 24px; align-items: center; padding-left: 4px; font-size: 8px; line-height: 12px; margin-bottom: 4px; color: #66667a; }
.msg-head time { color: #9a9aa8; font-size: 7px; }
.bubble { align-self: flex-start; padding: 0 11px; line-height: 25px; background: #e9ebed; border-radius: 8px; font-size: 9px; }
.bubble a { color: #0c7fc0; }
.chat form { display: flex; gap: 4px; margin-top: 17px; align-items: center; }
.chat input { flex: 1; min-width: 0; height: 26px; border: 1px solid #aaabb5; border-radius: 13px; padding: 0 11px; font-size: 9px; }
.chat input::placeholder { color: #777787; opacity: 1; }
.chat form button { width: 26px; height: 26px; border-radius: 50%; background: #f0f1f2; }

/* Factory planner: sizes for the full screen and for the shared picture */
.big {
  --title: 46px; --title-fs: 20px; --title-in: 18px; --win-w: 86px; --win-i: 16px;
  --btn: 71px; --btn-gap: 2px; --tool-top: 6px; --tool-left: 4px; --swirl-w: 46px; --swirl-h: 26px; --undo-w: 29px; --undo-h: 13px;
  --edu: 36px; --edu-top: 16px; --edu-r: 21px;
  --zoom-w: 42px; --zoom-i: 29px; --zoom-j: 22px; --zoom-r: 23px; --zoom-b: 31px; --zoom-h1: 46px; --zoom-h2: 43px;
  --panel: 480px; --ph: 65px; --ph-b: 64px; --ph-i: 31px; --ph-fs: 30px; --ph-r: 13px;
  --sel: 52px; --sel-fs: 24px; --sel-p: 22px; --chev: 17px; --eff: 66px; --eff-fs: 37px; --eff-p: 12px; --swap: 39px;
  --g: 268px; --g-mt: 18px; --g-pt: 40px; --g-fs: 56px; --g-sm: 30px; --g-lh: 60px; --g-gap: 12px; --g-r: 20px; --g-rlh: 26px; --mid: 5px;
  --tot: 36px; --tot-mt: 52px; --tot-h: 50px; --del: 20px; --del-h: 37px;
  --row: 38px; --row-fs: 20px; --grp: 65px; --grp1: 56px; --grp-fs: 27px; --grp-i: 32px; --grp-g: 29px; --grp-pt: 20px; --grp-pt1: 8px; --cell: 18px;
  --status: 36px; --st-fs: 20px; --st-p: 19px;
  --bar: 67px; --start: 81px; --search: 612px; --nav: 1054px; --app: 42px; --glyph: 29px;
  --tray-i: 28px; --slot: 57px; --wide: 70px; --wea: 134px; --wea-i: 38px; --wea-fs: 24px; --wea-g: 19px; --lang: 64px; --lang-fs: 20px; --clock: 120px; --clock-fs: 20px; --clock-lh: 34px; --peek: 19px;
  border: 4px solid #ff405c;
}
.mini {
  --title: 14px; --title-fs: 6px; --title-in: 4px; --win-w: 27px; --win-i: 6px;
  --btn: 22px; --btn-gap: 1px; --tool-top: 2px; --tool-left: 1px; --swirl-w: 14px; --swirl-h: 8px; --undo-w: 9px; --undo-h: 4px;
  --edu: 11px; --edu-top: 6px; --edu-r: 7px;
  --zoom-w: 14px; --zoom-i: 9px; --zoom-j: 7px; --zoom-r: 7px; --zoom-b: 9px; --zoom-h1: 14px; --zoom-h2: 14px;
  --panel: 150px; --ph: 21px; --ph-b: 20px; --ph-i: 10px; --ph-fs: 9px; --ph-r: 5px;
  --sel: 16px; --sel-fs: 7px; --sel-p: 7px; --chev: 6px; --eff: 21px; --eff-fs: 12px; --eff-p: 4px; --swap: 12px;
  --g: 84px; --g-mt: 6px; --g-pt: 12px; --g-fs: 18px; --g-sm: 9px; --g-lh: 20px; --g-gap: 4px; --g-r: 6px; --g-rlh: 10px; --mid: 2px;
  --tot: 12px; --tot-mt: 15px; --tot-h: 16px; --del: 6px; --del-h: 12px;
  --row: 12px; --row-fs: 6px; --grp: 20px; --grp1: 18px; --grp-fs: 9px; --grp-i: 10px; --grp-g: 7px; --grp-pt: 6px; --grp-pt1: 2px; --cell: 5px;
  --status: 11px; --st-fs: 6px; --st-p: 6px;
  --bar: 21px; --start: 25px; --search: 192px; --nav: 331px; --app: 13px; --glyph: 9px;
  --tray-i: 9px; --slot: 18px; --wide: 21px; --wea: 41px; --wea-i: 12px; --wea-fs: 8px; --wea-g: 4px; --lang: 20px; --lang-fs: 6px; --clock: 37px; --clock-fs: 6px; --clock-lh: 11px; --peek: 6px;
}
.second { --app: 17px; --glyph: 12px; --nav: 486px; --bar: 28px; --tray-i: 13px; --slot: 24px; --clock: 45px; --clock-fs: 9px; --clock-lh: 13px; }

.vt { display: grid; grid-template-rows: var(--title) 1fr var(--status) var(--bar); min-width: 0; min-height: 0; background: #1d1d1d; }
.vt-title { display: grid; grid-template-columns: 1fr auto 1fr; align-items: center; background: linear-gradient(#122946, #040d26); color: #e6e9ee; padding-left: var(--title-in); }
.vt-title h1, .vt-title h2 { grid-column: 2; font-size: var(--title-fs); white-space: nowrap; line-height: 1; }
.vt-win { display: flex; justify-content: flex-end; color: #fff; }
.vt-win button { width: var(--win-w); }
.big .vt-win button:last-child { width: 78px; }
.vt-win svg { width: var(--win-i); height: var(--win-i); }
.big .vt-win svg { width: 20px; height: 20px; }
.vt-work { display: grid; grid-template-columns: 1fr var(--panel); min-height: 0; min-width: 0; }
.canvas { position: relative; min-width: 0; min-height: 0; background: linear-gradient(#d1d1d1, #aaa); overflow: hidden; }
.plan { position: absolute; inset: 0; width: 100%; height: 100%; }
.pointer { position: absolute; left: 59%; top: 72%; width: 6px; height: 9px; }
.tools { position: absolute; top: var(--tool-top); left: var(--tool-left); display: flex; gap: var(--btn-gap); }
.tools button { width: var(--btn); height: var(--btn); background: #e0e0e0; }
.tools .main-btn { background: linear-gradient(#122b48, #040d26); position: relative; }
.main-btn::after { content: ""; position: absolute; right: 8%; bottom: 10%; width: 17%; height: 9%; background: #6f7687; clip-path: polygon(0 0, 100% 0, 50% 100%); }
.swirl { width: var(--swirl-w); height: var(--swirl-h); }
.undo { width: var(--undo-w); height: var(--undo-h); }
.edition { position: absolute; top: var(--edu-top); right: var(--edu-r); font-size: var(--edu); color: #555; line-height: 1.4; }
.grip { position: absolute; right: 1px; top: 51%; width: 10px; height: 24px; background: radial-gradient(circle, #111 1px, transparent 2px) 50% 0 / 10px 8px; }
.mini .grip { right: 0; width: 4px; height: 6px; background: radial-gradient(circle, #555 0, transparent 1px) 50% 0 / 4px 2px; }
.canvas::after { content: ""; position: absolute; inset: 0 0 0 auto; width: 6px; background: linear-gradient(90deg, transparent, rgba(0, 0, 0, .3)); }
.mini .canvas::after { width: 2px; }
.zoom { position: absolute; right: var(--zoom-r); bottom: var(--zoom-b); width: var(--zoom-w); display: flex; flex-direction: column; background: #efefef; box-shadow: 0 0 3px 1px #909090; }
.zoom button { height: var(--zoom-h2); }
.zoom button:first-child { height: var(--zoom-h1); border-bottom: 1px solid #ccc; }
.zoom svg { width: var(--zoom-j); height: var(--zoom-j); }
.zoom button:first-child svg { width: var(--zoom-i); height: var(--zoom-i); }

.panel { background: #f0f0f0; min-width: 0; }
.panel header { display: flex; align-items: center; gap: 1px; height: var(--ph); background: #3e3e3e; padding-right: var(--ph-r); }
.panel header button { width: var(--ph-b); height: 100%; background: #252525; }
.panel header svg { width: var(--ph-i); height: var(--ph-i); }
.panel h3 { margin-left: auto; font-size: var(--ph-fs); font-weight: 300; color: #d6d6d6; white-space: nowrap; }
.pick { display: grid; align-items: center; height: var(--sel); background: #fff; border: solid #aaa; border-width: 1px 0 1px 1px; }
.pick > * { grid-area: 1 / 1; }
.pick select { appearance: none; width: 100%; height: 100%; padding-left: var(--sel-p); font-size: var(--sel-fs); font-weight: 600; color: #555; }
.pick svg { justify-self: end; margin-right: 12px; width: var(--chev); height: var(--chev); pointer-events: none; }
.mini .pick svg { margin-right: 4px; }
.effort { display: flex; align-items: center; justify-content: space-between; height: var(--eff); padding: 0 2px 0 var(--eff-p); font-size: var(--eff-fs); font-weight: 300; color: #777; line-height: 1; }
.effort button { width: var(--swap); height: var(--swap); background: #0a85ff; }
.effort svg { width: 90%; height: 90%; }
.gauge { display: grid; justify-items: center; align-items: center; margin-top: var(--g-mt); }
.gauge, .total, .delta { padding-left: var(--mid); }
.gauge > * { grid-area: 1 / 1; }
.gauge > svg { width: var(--g); height: var(--g); }
.gauge > div { padding-top: var(--g-pt); display: flex; flex-direction: column; align-items: center; gap: var(--g-gap); }
.gauge strong { font-size: var(--g-fs); line-height: var(--g-lh); color: #ff4600; }
.gauge small { font-size: var(--g-sm); }
.gauge button { font-size: var(--g-r); line-height: var(--g-rlh); color: #0a85ff; }
.total { margin-top: var(--tot-mt); font-size: var(--tot); line-height: var(--tot-h); font-weight: 300; color: #777; text-align: center; }
.delta { font-size: var(--del); line-height: var(--del-h); text-align: center; }
.delta b { font-weight: 400; color: #ff4600; }
.panel table { width: 100%; border-collapse: collapse; background: #d3d3d3; border-bottom: 12px solid #d3d3d3; }
.mini .panel table { border-bottom-width: 2px; }
.panel th, .panel td { height: var(--row); padding: 0 var(--cell); font-size: var(--row-fs); line-height: 1; font-weight: 400; text-align: left; white-space: nowrap; }
.panel td { text-align: right; padding-right: calc(var(--cell) - 3px); }
.panel .grp th, .panel .grp td { height: var(--grp); padding-top: var(--grp-pt); font-size: var(--grp-fs); color: green; }
.panel tbody:first-child .grp > * { height: var(--grp1); padding-top: var(--grp-pt1); }
.grp svg { display: inline-block; vertical-align: middle; width: var(--grp-i); height: var(--grp-i); margin-right: var(--grp-g); }

.status { display: flex; align-items: center; padding-left: var(--st-p); background: linear-gradient(#122c48, #040d26); color: #d9dde3; font-size: var(--st-fs); line-height: 1; }

/* Taskbars */
.taskbar { display: flex; height: var(--bar); background: #1d1d1d; color: #fff; min-width: 0; overflow: hidden; }
.taskbar .start { width: var(--start); flex: none; }
.search { width: var(--search); flex: none; display: flex; align-items: center; gap: 22px; padding-left: 23px; background: #f2f2f2; border: solid #bdbdbd; border-width: 3px 1px 0; color: #111; }
.mini .search { border-width: 1px 0 0; padding: 0; }
.search svg { width: 34px; height: 34px; }
.search input { flex: 1; min-width: 0; font-size: 26px; }
.search input::placeholder { color: #2b2b2b; opacity: 1; }
.taskbar nav { display: flex; width: var(--nav); flex: none; }
.taskbar nav button { flex: 1; min-width: 0; }
.taskbar nav svg { width: var(--app); height: var(--app); }
.taskbar svg.glyph, .taskbar nav svg.glyph { width: var(--glyph); height: var(--glyph); }
.taskbar .active { background: #4a4a4a; }
.taskbar .run { box-shadow: inset 0 -2px #76b9f5; }
.tray { display: flex; align-items: center; margin-left: auto; flex: none; }
.tray i { width: var(--slot); display: flex; justify-content: center; }
.tray i.wide { width: var(--wide); }
.tray svg { width: var(--tray-i); height: var(--tray-i); }
.weather { width: var(--wea); display: flex; align-items: center; gap: var(--wea-g); font-size: var(--wea-fs); line-height: 1; padding-left: 6px; }
.mini .weather { padding-left: 0; }
.weather svg { width: var(--wea-i); height: var(--wea-i); }
.lang { width: var(--lang); text-align: center; font-size: var(--lang-fs); }
.tray time { width: var(--clock); text-align: center; font-size: var(--clock-fs); line-height: var(--clock-lh); white-space: nowrap; }
.peek { width: var(--peek); height: var(--bar); border-right: 2px solid #777; }
```
